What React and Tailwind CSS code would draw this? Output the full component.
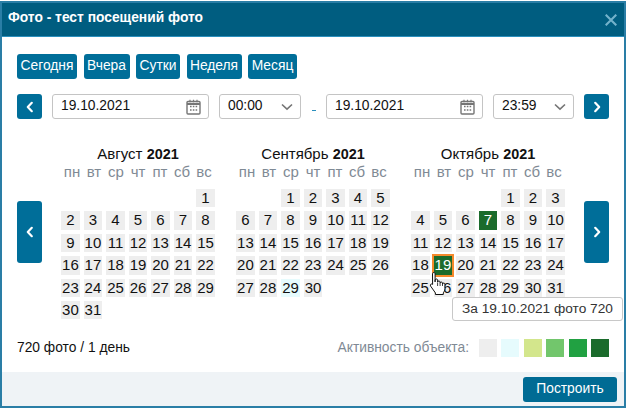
import React from "react";

const BLUE = "bg-[#006e99]";
const weekdays = ["пн", "вт", "ср", "чт", "пт", "сб", "вс"];

const months = [
  { name: "Август", offset: 6, days: 31, tint: {} },
  { name: "Сентябрь", offset: 2, days: 30, tint: { 29: "bg-[#e6fbfd]" } },
  { name: "Октябрь", offset: 4, days: 31, tint: { 7: "green", 19: "selected" } },
];

function Chevron({ dir = "left", size = 12 }) {
  return (
    <svg width={size} height={size} viewBox="0 0 12 12" fill="none" stroke="#fff" strokeWidth="2.2" strokeLinecap="round" strokeLinejoin="round">
      <path d={dir === "left" ? "M7.8 1.8 3.8 6l4 4.2" : "M4.2 1.8 8.2 6l-4 4.2"} />
    </svg>
  );
}

function CalIcon() {
  return (
    <svg width="15" height="16" viewBox="0 0 15 16" fill="none" className="shrink-0">
      <rect x="1" y="2.5" width="13" height="12.5" rx="1" stroke="#757575" strokeWidth="1.4" />
      <path d="M1 5h13" stroke="#757575" strokeWidth="2" />
      <path d="M4 0.8v2.5M7.5 0.8v2.5M11 0.8v2.5" stroke="#757575" strokeWidth="1.2" />
      <path d="M4 7.5h1.6M6.8 7.5h1.6M9.6 7.5h1.6M4 11h1.6M6.8 11h1.6M9.6 11h1.6" stroke="#757575" strokeWidth="1.6" />
    </svg>
  );
}

function DateField({ w }) {
  return (
    <div className={`${w} h-[25px] border border-[#c4c4c4] rounded-[3px] flex items-center justify-between pl-2 pr-[7px] text-[13.8px] text-[#111]`}>
      <span>19.10.2021</span>
      <CalIcon />
    </div>
  );
}

function TimeField({ value, w }) {
  return (
    <div className={`${w} h-[25px] border border-[#c4c4c4] rounded-[3px] flex items-center justify-between pl-2 pr-[7px] text-[13.8px] text-[#111]`}>
      <span>{value}</span>
      <svg width="12" height="8" viewBox="0 0 12 8" fill="none" stroke="#757575" strokeWidth="1.6"><path d="M1 1.5 6 6.2l5-4.7" /></svg>
    </div>
  );
}

function NavBtn({ dir, tall }) {
  return (
    <button className={`w-[25px] ${tall ? "h-[62px]" : "h-[25px]"} ${BLUE} rounded-[3px] flex items-center justify-center shrink-0`}>
      <Chevron dir={dir} />
    </button>
  );
}

function Month({ m }) {
  const cells = [];
  for (let i = 0; i < m.offset; i++) cells.push(<div key={"e" + i} />);
  for (let d = 1; d <= m.days; d++) {
    const t = m.tint[d];
    let cls = "bg-[#eeeeee] text-[#111]";
    if (t === "green") cls = "bg-[#1b6b2c] text-white";
    else if (t === "selected") cls = "bg-[#1b6b2c] text-white outline-2 outline-[#f58a2c]";
    else if (t) cls = t + " text-[#111]";
    cells.push(
      <div key={d} className={`h-[18.4px] flex items-center justify-center ${cls}`}>{d}</div>
    );
  }
  return (
    <div className="w-[154px]">
      <div className="h-[16px] leading-[16px] text-center text-[15px] text-[#111]">
        {m.name} <b className="text-[14.4px]">2021</b>
      </div>
      <div className="grid grid-cols-7 h-[16px] mt-[2px] mb-[9px] leading-[16px] text-center text-[15px] text-[#7f8a95]">
        {weekdays.map((w) => <div key={w}>{w}</div>)}
      </div>
      <div className="grid grid-cols-7 gap-x-[3.6px] gap-y-[4px] text-[15px]">{cells}</div>
    </div>
  );
}

export default function App() {
  return (
    <div className="relative w-[626px] h-[408px] pt-px bg-white overflow-hidden" style={{ fontFamily: '"Liberation Sans", Arial, sans-serif' }}>
      <div className="h-full border-2 border-[#2a7ea6] flex flex-col">
        <div className="h-[34px] shrink-0 bg-[#005d80] border-b border-[#2a8fbd] flex items-center justify-between pl-[6px] pr-[7px]">
          <span className="text-white font-bold text-[13.8px] mb-[3px]">Фото - тест посещений фото</span>
          <svg width="12" height="12" viewBox="0 0 12 12" stroke="#73b2cb" strokeWidth="2.1" fill="none"><path d="M.7.7l10.6 10.6M11.3.7.7 11.3" /></svg>
        </div>

        <div className="flex-1 px-[15px] pt-[17px]">
          <div className="flex gap-[6.5px] text-[13.8px] text-white">
            {[["Сегодня", "w-[60px]"], ["Вчера", "w-[46px]"], ["Сутки", "w-[44px]"], ["Неделя", "w-[55px]"], ["Месяц", "w-[49px]"]].map(([t, w]) => (
              <button key={t} className={`${w} h-[25px] ${BLUE} rounded-[3px] flex items-center justify-center`}>{t}</button>
            ))}
          </div>

          <div className="flex items-center mt-[15px]">
            <NavBtn dir="left" />
            <div className="w-[10px]" />
            <DateField w="w-[157px]" />
            <div className="w-[10px]" />
            <TimeField value="00:00" w="w-[82px]" />
            <div className="w-[25px] flex justify-center pt-[8px]"><div className="w-[4px] h-[1.5px] bg-[#2a8fbd]" /></div>
            <DateField w="w-[157px]" />
            <div className="w-[10px]" />
            <TimeField value="23:59" w="w-[81px]" />
            <div className="w-[10px]" />
            <NavBtn dir="right" />
          </div>

          <div className="flex mt-[27px]">
            <div className="mt-[55px]"><NavBtn dir="left" tall /></div>
            <div className="w-[19px]" />
            <div className="flex gap-[21px]">
              {months.map((m) => <Month key={m.name} m={m} />)}
            </div>
            <div className="w-[19px]" />
            <div className="mt-[55px]"><NavBtn dir="right" tall /></div>
          </div>

          <div className="flex items-center justify-between mt-[19.6px] h-[18px] text-[13.8px]">
            <span className="text-[#111]">720 фото / 1 день</span>
            <div className="flex items-center">
              <span className="text-[#7f8a95] mr-[10px]">Активность объекта:</span>
              <div className="flex gap-[4.4px]">
                {["bg-[#eeeeee]", "bg-[#e6fbfd]", "bg-[#d3e68c]", "bg-[#72c66c]", "bg-[#21a142]", "bg-[#1b6b2c]"].map((c) => (
                  <div key={c} className={`w-[18px] h-[18px] ${c}`} />
                ))}
              </div>
            </div>
          </div>
        </div>

        <div className="h-[34px] shrink-0 bg-[#eff3f6] flex items-center justify-end pr-[7px]">
          <button className="w-[94px] h-[25px] bg-[#006b94] rounded-[3px] text-white text-[13.8px]">Построить</button>
        </div>
      </div>

      <div className="absolute left-[452px] top-[297px] w-[171px] h-[24px] bg-white border border-[#c8c8c8] rounded-[3px] flex items-center justify-center text-[13.7px] text-[#333]">
        За 19.10.2021 фото 720
      </div>

      <svg className="absolute left-[429px] top-[271px]" width="20" height="27" viewBox="0 0 20 26" fill="#fff" stroke="#111" strokeWidth="1" strokeLinejoin="round">
        <path d="M3.5 2.2c0-1.6 2.6-1.6 2.6 0v8.2V8.6c0-1.5 2.5-1.5 2.5 0v2c0-1.5 2.5-1.5 2.5 0v1c0-1.4 2.4-1.4 2.4 0v1c0-1.4 2.4-1.4 2.4 0v4.6c0 2-1 3.2-1.6 4.2v1.6H6.4v-1.6L1.6 14.6c-1-1.4.8-2.9 2-1.7l0 0L3.5 2.2z" />
        <path d="M8.6 11v3.5M11.1 11.5v3M13.5 12.5v2" fill="none" strokeWidth="0.8" />
      </svg>
    </div>
  );
}
